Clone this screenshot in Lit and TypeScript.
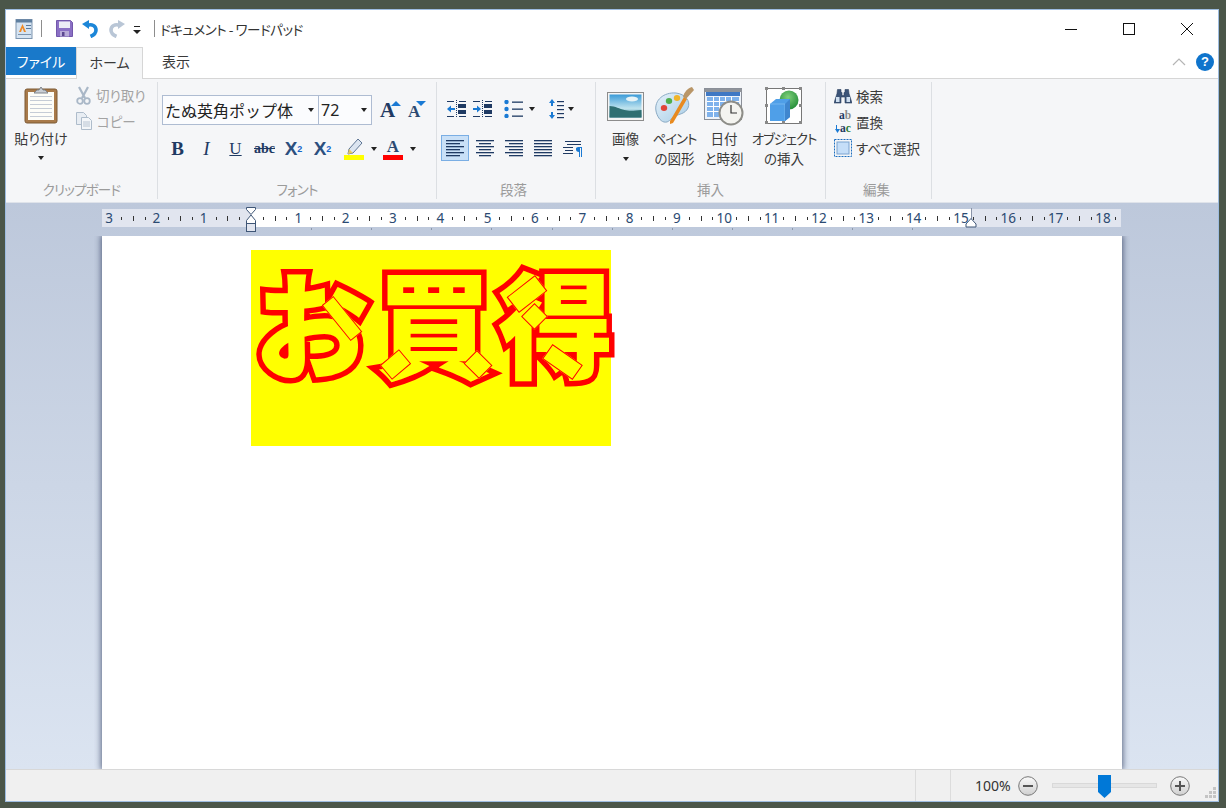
import { LitElement, html, css, svg } from 'lit';
import { customElement } from 'lit/decorators.js';

const arrow = html`<span class="arrow"></span>`;

const alignIcon = (lines: Array<[number, number]>) => html`<svg width="20" height="20" viewBox="0 0 20 20">
  ${lines.map(([a, b], i) => svg`<rect x=${a} y=${2 + i * 3} width=${b - a} height="1.3" fill="#1f3a63"></rect>`)}
</svg>`;

// the picture's little tilted blocks: centre x, y inside the picture, width, height, angle
const blocks = [
  [91, 68, 46, 15, 51],
  [144, 114, 25, 19, -40],
  [227, 114, 22, 19, 45],
  [276, 44, 36, 20, -38],
  [283, 66, 19, 19, 45],
  [311, 112, 37, 18, 35],
];

@customElement('app-root')
export class AppRoot extends LitElement {
  static styles = css`
    :host {
      display: block;
      width: 1226px;
      height: 808px;
      box-sizing: border-box;
      padding: 9px 7px 6px 5px;
      background: #4b5649;
      font-family: 'Noto Sans CJK JP', 'Noto Sans', sans-serif;
      font-feature-settings: 'palt';
      font-size: 13.5px;
      color: #3a3a3a;
      overflow: hidden;
    }
    svg { display: block; flex: none; }
    .window {
      height: 100%;
      box-sizing: border-box;
      border: 1px solid #9dbce0;
      display: flex;
      flex-direction: column;
      background: #fff;
    }

    .titlebar { height: 37px; display: flex; align-items: center; flex: none; }
    .titlebar .app { margin-left: 9px; }
    .vsep { width: 1px; height: 17px; background: #8d8d8d; flex: none; }
    .qat { display: flex; align-items: center; margin-left: 7px; }
    .title { margin-left: 5px; font-size: 13.5px; letter-spacing: -0.45px; color: #333; }
    .winbtns { margin-left: auto; display: flex; padding-right: 2px; align-self: flex-start; }
    .winbtn { width: 58px; height: 37px; display: flex; align-items: center; justify-content: center; }

    .tabs { height: 32px; display: flex; flex: none; position: relative; border-bottom: 1px solid #d6d6d6; box-sizing: border-box; }
    .tab { display: flex; align-items: center; justify-content: center; font-size: 14px; height: 28px; }
    .tab.file { width: 70px; background: #1979ca; color: #fff; }
    .tab.home {
      width: 67px;
      height: 32px;
      box-sizing: border-box;
      background: #f5f6f7;
      border: 1px solid #d6d6d6;
      border-bottom: none;
      padding-bottom: 3px;
      position: relative;
      z-index: 1;
    }
    .tab.view { width: 66px; }
    .tabtools { margin-left: auto; display: flex; align-items: center; gap: 10px; padding: 0 4px 2px 0; }
    .help {
      width: 18px;
      height: 18px;
      border-radius: 50%;
      background: #0f74cc;
      color: #fff;
      font: bold 13px/18px 'Liberation Sans', sans-serif;
      text-align: center;
    }

    .ribbon {
      height: 124px;
      flex: none;
      box-sizing: border-box;
      display: flex;
      padding-top: 3px;
      background: #f5f6f8;
      border-bottom: 1px solid #dfe3ea;
    }
    .group {
      height: 117px;
      display: flex;
      flex-direction: column;
      flex: none;
      box-sizing: border-box;
      border-right: 1px solid #dcdfe3;
    }
    .group .body { height: 97px; position: relative; }
    .glabel { height: 20px; line-height: 20px; text-align: center; font-size: 13.5px; color: #9b9b9b; }
    .glabel.kana { letter-spacing: -0.8px; }
    .arrow {
      display: inline-block;
      width: 0;
      height: 0;
      border-left: 3.5px solid transparent;
      border-right: 3.5px solid transparent;
      border-top: 4px solid #222;
      flex: none;
    }

    .clip { width: 152px; }
    .clip .body { display: flex; padding-left: 8px; }
    .paste { width: 54px; display: flex; flex-direction: column; align-items: center; padding-top: 4px; }
    .paste .name { margin-top: 4px; line-height: 20px; font-size: 14px; }
    .paste .arrow { margin-top: 8px; }
    .side { margin-left: 8px; }
    .srow { height: 26px; display: flex; align-items: center; gap: 5px; }
    .disabled { color: #a3a3a3; }

    .font { width: 279px; }
    .font .body { padding: 13px 0 0 4px; }
    .frow { display: flex; align-items: center; }
    .combo {
      height: 30px;
      box-sizing: border-box;
      border: 1px solid #aebcd2;
      background: #fbfcfe;
      display: flex;
      align-items: center;
      justify-content: space-between;
      padding: 0 4px 0 2px;
      font-size: 16px;
      font-feature-settings: normal;
      color: #222;
    }
    .combo.face { width: 157px; }
    .combo.size { width: 54px; margin-left: -1px; font-family: 'Noto Sans', sans-serif; }
    .grow { margin-left: 8px; width: 20px; height: 18px; display: flex; align-items: flex-start; }
    .grow span { font: bold 21px/19px 'Liberation Serif', serif; color: #1f3a63; }
    .grow.small span { font-size: 17px; color: #2c4a72; margin-top: 1px; }
    .grow svg { margin-left: -4px; }
    .frow.fmt { margin-top: 13px; height: 22px; padding-left: 1px; }
    .fbtn {
      width: 29px;
      height: 22px;
      display: flex;
      align-items: center;
      justify-content: center;
      color: #1f3a63;
      font-family: 'Liberation Serif', serif;
      font-size: 19px;
    }
    .fbtn.b { font-weight: bold; }
    .fbtn.i { font-style: italic; }
    .fbtn.u { text-decoration: underline; font-size: 17px; }
    .fbtn.s { text-decoration: line-through; font-size: 14px; font-weight: bold; }
    .fbtn.x { font-family: 'Liberation Sans', sans-serif; font-weight: bold; font-size: 19px; color: #2b4f7e; }
    .fbtn sub, .fbtn sup { font-size: 9px; color: #1565c8; line-height: 0; }
    .colorbtn { width: 20px; display: flex; flex-direction: column; align-items: center; }
    .colorbtn .bar { width: 20px; height: 5px; }
    .colorbtn .a { font: bold 17px/17px 'Liberation Serif', serif; color: #2c4a72; }
    .arrowcell { width: 19px; display: flex; justify-content: center; }

    .para { width: 159px; }
    .para .body { padding-top: 15px; }
    .para .glabel { padding-right: 5px; }
    .prow { display: flex; align-items: center; height: 23px; padding-left: 10px; }
    .prow.al { margin-top: 15px; height: 26px; padding-left: 4px; }
    .albtn { width: 29px; height: 26px; display: flex; align-items: center; justify-content: center; box-sizing: border-box; }
    .albtn.on { width: 28px; margin-right: 1px; background: #c9e0f7; border: 1px solid #7aaee4; }

    .insert { width: 230px; }
    .insert .body { display: flex; padding-left: 5px; }
    .ins { display: flex; flex-direction: column; align-items: center; padding-top: 4px; flex: none; }
    .ins .pic { height: 40px; display: flex; align-items: center; }
    .ins .lab { margin-top: 2px; line-height: 20px; text-align: center; font-size: 13.5px; white-space: nowrap; }
    .ins .lab .k { letter-spacing: -1.1px; }
    .ins .arrow { display: block; margin: 9px auto 0; }

    .edit { width: 106px; }
    .edit .body { padding: 1px 0 0 8px; }
    .edit .glabel { padding-right: 4px; }
    .erow { height: 26px; display: flex; align-items: center; gap: 4px; }
    .erow .ic { width: 18px; display: flex; justify-content: center; }
    .abac { font: bold 11.5px/13px 'Liberation Serif', serif; color: #1f3a63; }
    .abac div { display: flex; align-items: center; padding-left: 4px; }
    .abac div.second { padding-left: 0; }
    .abac i { font-style: normal; color: #8a8a8a; }
    .abac b { color: #2a7a35; }

    .workspace {
      flex: 1;
      min-height: 0;
      display: flex;
      flex-direction: column;
      overflow: hidden;
      background: linear-gradient(#bdc8db, #dbe4f1);
    }
    .ruler { margin-left: 96px; }
    .ruler text { font-family: 'Noto Sans', sans-serif; font-size: 13.5px; fill: #2b4a72; text-anchor: middle; }
    .page {
      flex: 1;
      margin-left: 96px;
      width: 1020px;
      box-sizing: border-box;
      background: #fff;
      padding: 14px 0 0 149px;
      box-shadow: 0 0 6px 1px rgba(50, 62, 95, 0.75);
      clip-path: inset(0 -8px 0 -8px);
    }
    .art {
      width: 360px;
      height: 196px;
      background: #ff0;
      display: flex;
      position: relative;
      padding: 0 0 0 3px;
      box-sizing: border-box;
      font-family: 'Noto Sans CJK JP', sans-serif;
      font-feature-settings: normal;
      font-weight: 900;
      font-size: 116px;
      line-height: 138px;
      color: #ff0;
    }
    .glyph {
      position: relative;
      z-index: 0;
      width: 121px;
      margin-right: 1px;
      flex: none;
    }
    .glyph::before {
      content: attr(data-t);
      position: absolute;
      left: 0;
      top: 0;
      z-index: -1;
      -webkit-text-stroke: 11px #f00;
    }
    .block {
      position: absolute;
      box-sizing: border-box;
      background: #ff0;
      border: 1px solid #f00;
      outline: 0;
    }

    .status {
      height: 32px;
      flex: none;
      box-sizing: border-box;
      background: #f0f0f0;
      border-top: 1px solid #d8d8d8;
      display: flex;
      align-items: center;
      position: relative;
    }
    .ssep { width: 1px; height: 31px; background: #dcdcdc; flex: none; }
    .zoomtext { margin-left: 24px; width: 36px; font: 14px 'Noto Sans', sans-serif; color: #333; }
    .zbtn { margin-left: 7px; }
    .track {
      width: 105px;
      height: 5px;
      margin-left: 14px;
      background: #e6e6e6;
      border: 1px solid #d9d9d9;
      box-sizing: border-box;
      position: relative;
    }
    .thumb { position: absolute; left: 45px; top: -9px; }
    .zplus { margin-left: 13px; }
    .grip { position: absolute; right: 2px; bottom: 3px; }
  `;

  rulerSvg() {
    const x0 = 149;
    const cm = 47.33;
    const marks = [];
    for (let q = -12; q <= 74; q++) {
      const x = x0 + (q * cm) / 4;
      if (x < 2 || x > 1016 || q === 0) continue;
      if (q % 4 === 0) {
        const n = Math.abs(q / 4);
        marks.push(svg`<text x=${x} y="20">${n}</text>`);
      } else if (q % 2 === 0) {
        marks.push(svg`<rect x=${Math.round(x)} y="13" width="1" height="5" fill="#333"></rect>`);
      } else {
        marks.push(svg`<rect x=${Math.round(x)} y="14" width="1" height="3" fill="#333"></rect>`);
      }
    }
    const tabs = [];
    for (let k = 1; k <= 11; k++) {
      tabs.push(svg`<rect x=${Math.round(x0 + k * 60.1)} y="25" width="1" height="2" fill="#8d99ad"></rect>`);
    }
    return html`<svg class="ruler" width="1022" height="33" viewBox="0 0 1022 33">
      <rect x="0" y="6" width="1019" height="18" fill="#e1e5ef"></rect>
      <rect x="149" y="6" width="720" height="18" fill="#fff"></rect>
      ${marks}${tabs}
      <rect x="869" y="5" width="1" height="12" fill="#8a94a8"></rect>
      <path d="M144.5 4.5h9v2l-4.5 5-4.500-5zM149 12l4.500 5.500v3h-9v-3z" fill="#fff" stroke="#3f5676"></path>
      <rect x="144.500" y="20.500" width="9" height="8" fill="#e1e5ef" stroke="#3f5676"></rect>
      <path d="M869 15.500l5 5.500v3h-10v-3z" fill="#fff" stroke="#3f5676"></path>
    </svg>`;
  }

  render() {
    return html`
      <div class="window">
        <div class="titlebar">
          <svg class="app" width="18" height="20" viewBox="0 0 18 20">
            <rect x="1" y="0.500" width="16" height="19" fill="#d6e4f2" stroke="#7c94ae"></rect>
            <rect x="1" y="0.500" width="16" height="3" fill="#5f7f9f"></rect>
            <path d="M4 13l3.500-8 3.500 8h-2l-1.500-4-1.500 4z" fill="#f08a24"></path>
            <rect x="11" y="6" width="5" height="1" fill="#5a7a9c"></rect>
            <rect x="11" y="9" width="5" height="1" fill="#5a7a9c"></rect>
            <rect x="3" y="15" width="13" height="1" fill="#7c94ae"></rect>
          </svg>
          <div class="vsep" style="margin-left:8px"></div>
          <div class="qat">
            <svg width="17" height="17" viewBox="0 0 17 17" style="margin-left:7px">
              <path d="M0.500 0.500h14l2 2v14h-16z" fill="#8a6fc4" stroke="#7257ab"></path>
              <rect x="3" y="1.500" width="11" height="6.500" fill="#ecebf6"></rect>
              <rect x="4" y="11" width="9" height="5.500" fill="#b8abd8"></rect>
              <rect x="6" y="12" width="2.500" height="4" fill="#5b4790"></rect>
            </svg>
            <svg width="17" height="18" viewBox="0 0 17 18" style="margin-left:9px">
              <path d="M5 5.500c5-2 9 .5 9 4.500 0 3-2 5-5.500 6.500" fill="none" stroke="#1c86d8" stroke-width="3.600"></path>
              <path d="M0 4l7-4v9z" fill="#1c86d8"></path>
            </svg>
            <svg width="17" height="18" viewBox="0 0 17 18" style="margin-left:9px">
              <path d="M12 5.500c-5-2-9 .5-9 4.500 0 3 2 5 5.500 6.500" fill="none" stroke="#b9c6d6" stroke-width="3.600"></path>
              <path d="M17 4l-7-4v9z" fill="#b9c6d6"></path>
            </svg>
            <svg width="8" height="9" viewBox="0 0 8 9" style="margin-left:8px;margin-top:3px">
              <rect x="1" y="0" width="6" height="1" fill="#222"></rect>
              <path d="M0 4h8l-4 4z" fill="#222"></path>
            </svg>
          </div>
          <div class="vsep" style="margin-left:13px"></div>
          <div class="title">ドキュメント - ワードパッド</div>
          <div class="winbtns">
            <div class="winbtn"><svg width="12" height="12"><rect y="6" width="12" height="1" fill="#111"></rect></svg></div>
            <div class="winbtn"><svg width="12" height="12"><rect x="0.500" y="0.500" width="11" height="11" fill="none" stroke="#111"></rect></svg></div>
            <div class="winbtn"><svg width="12" height="12"><path d="M0 0l12 12M12 0L0 12" stroke="#111" fill="none"></path></svg></div>
          </div>
        </div>

        <div class="tabs">
          <div class="tab file">ファイル</div>
          <div class="tab home">ホーム</div>
          <div class="tab view">表示</div>
          <div class="tabtools">
            <svg width="14" height="8" viewBox="0 0 14 8"><path d="M1 7l6-6 6 6" fill="none" stroke="#b5b5b5" stroke-width="1.200"></path></svg>
            <div class="help">?</div>
          </div>
        </div>

        <div class="ribbon">
          <div class="group clip">
            <div class="body">
              <div class="paste">
                <svg width="34" height="38" viewBox="0 0 34 38">
                  <rect x="1" y="3" width="32" height="34" rx="2" fill="#a87a4a" stroke="#7d5a35"></rect>
                  <rect x="4" y="6" width="26" height="28" fill="#fdfdf8"></rect>
                  ${[10, 14, 18, 22, 26, 30].map((y) => svg`<rect x="6" y=${y} width="22" height="1" fill="#c5ccd6"></rect>`)}
                  <path d="M10 7l3-3h2l2-3 2 3h2l3 3z" fill="#c9ced4" stroke="#7f858c"></path>
                </svg>
                <div class="name">貼り付け</div>
                ${arrow}
              </div>
              <div class="side disabled">
                <div class="srow">
                  <svg width="15" height="19" viewBox="0 0 15 19">
                    <path d="M3 1l6 11M12 1L6 12" stroke="#a9b7c7" stroke-width="2.200" fill="none"></path>
                    <circle cx="4" cy="15" r="2.800" fill="none" stroke="#a9b7c7" stroke-width="1.800"></circle>
                    <circle cx="11" cy="15" r="2.800" fill="none" stroke="#a9b7c7" stroke-width="1.800"></circle>
                  </svg>
                  <span>切り取り</span>
                </div>
                <div class="srow">
                  <svg width="16" height="18" viewBox="0 0 16 18">
                    <path d="M.5.500h7l3 3v9h-10z" fill="#e8edf3" stroke="#aebccb"></path>
                    <path d="M5.500 5.500h7l3 3v9h-10z" fill="#f3f6f9" stroke="#aebccb"></path>
                    <path d="M7 10h7M7 12h7M7 14h7" stroke="#b8c4d2"></path>
                  </svg>
                  <span>コピー</span>
                </div>
              </div>
            </div>
            <div class="glabel kana">クリップボード</div>
          </div>

          <div class="group font">
            <div class="body">
              <div class="frow">
                <div class="combo face"><span>たぬ英角ポップ体</span>${arrow}</div>
                <div class="combo size"><span>72</span>${arrow}</div>
                <div class="grow">
                  <span>A</span>
                  <svg width="10" height="5" viewBox="0 0 10 5"><path d="M0 5l5-5 5 5z" fill="#1a7ad4"></path></svg>
                </div>
                <div class="grow small">
                  <span>A</span>
                  <svg width="10" height="5" viewBox="0 0 10 5"><path d="M0 0h10L5 5z" fill="#1a7ad4"></path></svg>
                </div>
              </div>
              <div class="frow fmt">
                <div class="fbtn b">B</div>
                <div class="fbtn i">I</div>
                <div class="fbtn u">U</div>
                <div class="fbtn s">abc</div>
                <div class="fbtn x">X<sub>2</sub></div>
                <div class="fbtn x">X<sup>2</sup></div>
                <div class="colorbtn" style="margin-left:7px">
                  <svg width="20" height="17" viewBox="0 0 20 17">
                    <path d="M14 1l4 4-9 10-5 1 1-5z" fill="#dbe4f0" stroke="#5f7695"></path>
                    <path d="M4 16l1-5 4 4z" fill="#e8c860"></path>
                  </svg>
                  <div class="bar" style="background:#ff0"></div>
                </div>
                <div class="arrowcell">${arrow}</div>
                <div class="colorbtn">
                  <div class="a">A</div>
                  <div class="bar" style="background:#f00"></div>
                </div>
                <div class="arrowcell">${arrow}</div>
              </div>
            </div>
            <div class="glabel kana">フォント</div>
          </div>

          <div class="group para">
            <div class="body">
              <div class="prow">
                <svg width="19" height="18" viewBox="0 0 19 18">
                  <path d="M0 1.500h7M0 16.500h7M12 1.500h7M12 16.500h7" stroke="#1f3a63"></path>
                  <path d="M9.500 0v18" stroke="#1f3a63" stroke-dasharray="1 1"></path>
                  <rect x="11" y="4" width="8" height="4" fill="#1f3a63"></rect>
                  <rect x="11" y="10" width="8" height="4" fill="#1f3a63"></rect>
                  <path d="M0 9l4-3.500v7z" fill="#1a7ad4"></path>
                  <path d="M4 8h4v2H4z" fill="#1a7ad4"></path>
                </svg>
                <svg width="19" height="18" viewBox="0 0 19 18" style="margin-left:7px">
                  <path d="M0 1.500h7M0 16.500h7M12 1.500h7M12 16.500h7" stroke="#1f3a63"></path>
                  <path d="M9.500 0v18" stroke="#1f3a63" stroke-dasharray="1 1"></path>
                  <rect x="11" y="4" width="8" height="4" fill="#1f3a63"></rect>
                  <rect x="11" y="10" width="8" height="4" fill="#1f3a63"></rect>
                  <path d="M8 9L4 5.500v7z" fill="#1a7ad4"></path>
                  <path d="M0 8h4v2H0z" fill="#1a7ad4"></path>
                </svg>
                <svg width="19" height="18" viewBox="0 0 19 18" style="margin-left:12px">
                  ${[2, 9, 16].map((y) => svg`
                    <circle cx="2.500" cy=${y} r="2.200" fill="#1a7ad4"></circle>
                    <rect x="8" y=${y - 0.5} width="11" height="1.300" fill="#1f3a63"></rect>`)}
                </svg>
                <span class="arrow" style="margin-left:6px"></span>
                <svg width="15" height="20" viewBox="0 0 15 20" style="margin-left:14px">
                  <path d="M3 0l3 4H4v3H2V4H0zM3 20l3-4H4v-3H2v3H0z" fill="#1a7ad4"></path>
                  ${[2, 6, 10, 14, 18].map((y) => svg`<rect x="8" y=${y} width="7" height="1.200" fill="#1f3a63"></rect>`)}
                </svg>
                <span class="arrow" style="margin-left:4px"></span>
              </div>
              <div class="prow al">
                <div class="albtn on">${alignIcon([[1, 19], [1, 15], [1, 19], [1, 15], [1, 19], [1, 15]])}</div>
                <div class="albtn">${alignIcon([[1, 19], [4, 16], [1, 19], [4, 16], [1, 19], [4, 16]])}</div>
                <div class="albtn">${alignIcon([[1, 19], [5, 19], [1, 19], [5, 19], [1, 19], [5, 19]])}</div>
                <div class="albtn">${alignIcon([[1, 19], [1, 19], [1, 19], [1, 19], [1, 19], [1, 19]])}</div>
                <div class="albtn">
                  <svg width="20" height="20" viewBox="0 0 20 20">
                    <path d="M3 3.500h16M5 6.500h14M1 9.500h10M3 12.500h8M1 15.500h10" stroke="#1f3a63" stroke-width="1.200"></path>
                    <path d="M17 9h3v10h-1V10h-1v9h-1v-5c-2 0-3-1-3-2.500S14 9 17 9z" fill="#1a7ad4"></path>
                  </svg>
                </div>
              </div>
            </div>
            <div class="glabel">段落</div>
          </div>

          <div class="group insert">
            <div class="body">
              <div class="ins" style="width:49px">
                <div class="pic">
                  <svg width="37" height="29" viewBox="0 0 37 29">
                    <defs>
                      <linearGradient id="sky" x1="0" y1="0" x2="0" y2="1">
                        <stop offset="0" stop-color="#3a9bd8"></stop>
                        <stop offset="0.600" stop-color="#bfe3ee"></stop>
                        <stop offset="1" stop-color="#3f8a9c"></stop>
                      </linearGradient>
                    </defs>
                    <rect x="0.500" y="0.500" width="36" height="28" fill="#f4f4f4" stroke="#8c8c8c"></rect>
                    <rect x="2.500" y="2.500" width="32" height="23" fill="url(#sky)"></rect>
                    <path d="M2.500 14c6 0 10 3 15 4 4 1 8 1 17 0v7.500h-32z" fill="#2f6f72"></path>
                    <ellipse cx="25" cy="7" rx="6" ry="2.500" fill="#e6f3f7"></ellipse>
                  </svg>
                </div>
                <div class="lab">画像</div>
                ${arrow}
              </div>
              <div class="ins" style="width:49px">
                <div class="pic">
                  <svg width="40" height="38" viewBox="0 0 40 38">
                    <defs>
                      <linearGradient id="pal" x1="0" y1="0" x2="1" y2="1">
                        <stop offset="0" stop-color="#e4f1fa"></stop>
                        <stop offset="1" stop-color="#a9cde6"></stop>
                      </linearGradient>
                    </defs>
                    <path d="M1 24C-1 13 9 5 21 6c9 1 15 8 12 15-3 6-9 6-13 8-5 3-6 7-11 6-4-1-7-6-8-11z" fill="url(#pal)" stroke="#8aaac4"></path>
                    <ellipse cx="9" cy="21" rx="3.200" ry="3" fill="#e0453a"></ellipse>
                    <ellipse cx="14" cy="14" rx="3.200" ry="3" fill="#4fae4c"></ellipse>
                    <ellipse cx="22" cy="11" rx="3.200" ry="3" fill="#f0b429"></ellipse>
                    <path d="M15 37l3-1 14-24-3-2-14 24z" fill="#e88a1f"></path>
                    <path d="M28 10l3 2 8-9-2-3c-4 1-8 5-9 10z" fill="#b99668"></path>
                  </svg>
                </div>
                <div class="lab"><span class="k">ペイント</span><br />の図形</div>
              </div>
              <div class="ins" style="width:50px">
                <div class="pic">
                  <svg width="40" height="39" viewBox="0 0 40 39">
                    <rect x="0.500" y="1.500" width="37" height="31" fill="#eef3fa" stroke="#8a8f98"></rect>
                    <rect x="1" y="2" width="37" height="3" fill="#8f939a"></rect>
                    <rect x="2" y="5" width="34" height="4" fill="#3f78c4"></rect>
                    <rect x="3" y="10" width="32" height="20" fill="#7fb2ec"></rect>
                    ${[9, 15, 21, 27].map((x) => svg`<rect x=${x} y="10" width="1" height="20" fill="#fff"></rect>`)}
                    ${[14, 19, 24].map((y) => svg`<rect x="3" y=${y} width="32" height="1" fill="#fff"></rect>`)}
                    <circle cx="27" cy="26" r="11.500" fill="#f4f4f0" stroke="#8d8d88" stroke-width="2"></circle>
                    <path d="M27 18v8h6" fill="none" stroke="#333" stroke-width="1.200"></path>
                  </svg>
                </div>
                <div class="lab">日付<br />と時刻</div>
              </div>
              <div class="ins" style="width:70px">
                <div class="pic">
                  <svg width="38" height="38" viewBox="0 0 38 38">
                    <defs>
                      <radialGradient id="ball" cx="0.450" cy="0.350" r="0.700">
                        <stop offset="0" stop-color="#7fd07a"></stop>
                        <stop offset="1" stop-color="#1f8a35"></stop>
                      </radialGradient>
                    </defs>
                    <rect x="1.500" y="1.500" width="35" height="35" fill="#fff" stroke="#777"></rect>
                    ${[[0, 0], [17, 0], [34, 0], [0, 17], [34, 17], [0, 34], [17, 34], [34, 34]].map(
                      ([x, y]) => svg`<rect x=${x} y=${y} width="3" height="3" fill="#888"></rect>`
                    )}
                    <circle cx="24" cy="13" r="9.500" fill="url(#ball)"></circle>
                    <path d="M5 17l6-5h14v18l-5 4H5z" fill="#4f9fe8"></path>
                    <path d="M5 17h15v17" fill="none" stroke="#7fbdf2" stroke-width="0.800"></path>
                    <path d="M20 17l5-5v18l-5 4z" fill="#3f86cf"></path>
                  </svg>
                </div>
                <div class="lab"><span class="k">オブジェクト</span><br />の挿入</div>
              </div>
            </div>
            <div class="glabel">挿入</div>
          </div>

          <div class="group edit">
            <div class="body">
              <div class="erow">
                <div class="ic">
                  <svg width="18" height="15" viewBox="0 0 18 15">
                    <path d="M3.500.500h3.500v3h1v3h2v-3h1v-3h3.500l.5 4 3 9.500h-7V8H7v6H0l3-9.500z" fill="#3c5478" stroke="#2c405f" stroke-width="0.600"></path>
                    <rect x="2" y="8" width="3.500" height="5" fill="#cfdff0"></rect>
                    <rect x="12.500" y="8" width="3.500" height="5" fill="#cfdff0"></rect>
                  </svg>
                </div>
                <span>検索</span>
              </div>
              <div class="erow">
                <div class="ic">
                  <div class="abac">
                    <div>a<i>b</i></div>
                    <div class="second">
                      <svg width="5" height="8" viewBox="0 0 5 8"><path d="M1 0h1v4h3L2.500 8 0 4h1z" fill="#1a7ad4"></path></svg>a<b>c</b>
                    </div>
                  </div>
                </div>
                <span>置換</span>
              </div>
              <div class="erow">
                <div class="ic">
                  <svg width="18" height="18" viewBox="0 0 18 18">
                    <rect x="0.500" y="0.500" width="17" height="17" fill="none" stroke="#1c6fc0" stroke-dasharray="2 1"></rect>
                    <rect x="3" y="3" width="12" height="12" fill="#c5def8" stroke="#7aa3d0"></rect>
                  </svg>
                </div>
                <span>すべて選択</span>
              </div>
            </div>
            <div class="glabel">編集</div>
          </div>
        </div>

        <div class="workspace">
          ${this.rulerSvg()}
          <div class="page">
            <div class="art">
              <span class="glyph" data-t="お">お</span>
              <span class="glyph" data-t="買">買</span>
              <span class="glyph" data-t="得">得</span>
              ${blocks.map(
                ([x, y, w, h, a]) => html`<div
                  class="block"
                  style="left:${x - w / 2}px;top:${y - h / 2}px;width:${w}px;height:${h}px;transform:rotate(${a}deg)"
                ></div>`
              )}
            </div>
          </div>
        </div>

        <div class="status">
          <div class="ssep" style="margin-left:909px"></div>
          <div class="ssep" style="margin-left:34px"></div>
          <div class="zoomtext">100%</div>
          <svg class="zbtn" width="20" height="20" viewBox="0 0 20 20">
            <defs>
              <linearGradient id="zb" x1="0" y1="0" x2="0" y2="1">
                <stop offset="0" stop-color="#fafafa"></stop>
                <stop offset="1" stop-color="#cfcfcf"></stop>
              </linearGradient>
            </defs>
            <circle cx="10" cy="10" r="9.300" fill="url(#zb)" stroke="#777"></circle>
            <rect x="5" y="9" width="10" height="2" fill="#555"></rect>
          </svg>
          <div class="track">
            <svg class="thumb" width="13" height="23" viewBox="0 0 13 23"><path d="M0 0h13v17l-6.500 6L0 17z" fill="#0078d7"></path></svg>
          </div>
          <svg class="zplus" width="20" height="20" viewBox="0 0 20 20">
            <circle cx="10" cy="10" r="9.300" fill="url(#zb)" stroke="#777"></circle>
            <path d="M5 9h4V5h2v4h4v2h-4v4H9v-4H5z" fill="#555"></path>
          </svg>
          <svg class="grip" width="11" height="11" viewBox="0 0 11 11">
            ${[[8, 0], [4, 4], [8, 4], [0, 8], [4, 8], [8, 8]].map(
              ([x, y]) => svg`<rect x=${x} y=${y} width="3" height="3" fill="#c4c4c4"></rect>`
            )}
          </svg>
        </div>
      </div>
    `;
  }
}
